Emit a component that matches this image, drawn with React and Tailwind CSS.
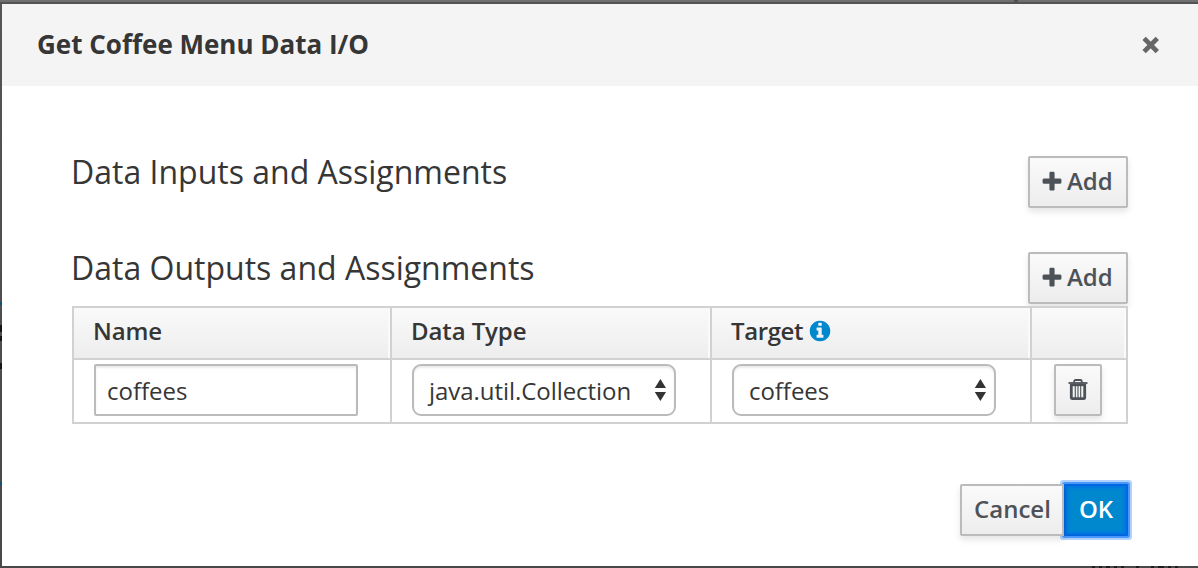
const PLUS =
  'M1600 736v192q0 40-28 68t-68 28h-416v416q0 40-28 68t-68 28h-192q-40 0-68-28t-28-68v-416h-416q-40 0-68-28t-28-68v-192q0-40 28-68t68-28h416v-416q0-40 28-68t68-28h192q40 0 68 28t28 68v416h416q40 0 68 28t28 68z';
const INFO =
  'M1152 1376v-160q0-14-9-23t-23-9h-96v-512q0-14-9-23t-23-9h-320q-14 0-23 9t-9 23v160q0 14 9 23t23 9h96v320h-96q-14 0-23 9t-9 23v160q0 14 9 23t23 9h448q14 0 23-9t9-23zm-128-896v-160q0-14-9-23t-23-9h-192q-14 0-23 9t-9 23v160q0 14 9 23t23 9h192q14 0 23-9t9-23zm640 416q0 209-103 385.5t-279.5 279.5-385.5 103-385.5-103-279.5-279.5-103-385.5 103-385.5 279.5-279.5 385.5-103 385.5 103 279.5 279.5 103 385.5z';

const BUTTON =
  'flex h-[52px] shrink-0 items-center border-2 border-[#bbb] bg-gradient-to-b from-[#fafafa] to-[#ededed] font-semibold text-[#4d5258] shadow-[0_4px_6px_rgba(3,3,3,0.1)]';

function AddButton() {
  return (
    <button className={BUTTON + ' w-[100px] rounded-[2px] pl-2.5'}>
      <svg viewBox="0 0 1792 1792" className="size-6 shrink-0" fill="currentColor">
        <path d={PLUS} />
      </svg>
      <span className="ml-[3px] pb-0.5 leading-8">Add</span>
    </button>
  );
}

function Section({ title }) {
  return (
    <div className="flex h-[52px] items-start justify-between">
      <h4 className="-ml-px text-[32px] leading-8 font-normal">{title}</h4>
      <AddButton />
    </div>
  );
}

function HeaderCell({ children }) {
  return (
    <th className="h-[52px] border-2 border-[#d1d1d1] bg-gradient-to-b from-[#fafafa] to-[#ededed] p-0 pl-[19px] text-left font-semibold tracking-[-0.1px] shadow-[inset_-2px_0_0_#fafafa]">
      <div className="flex h-8 items-center pb-1">{children}</div>
    </th>
  );
}

function SelectBox({ value }) {
  return (
    <div className="flex h-[52px] w-[264px] items-center justify-between rounded-[9px] border-2 border-[#bbb] bg-white pr-2 pl-[15px] shadow-[inset_0_2px_2px_rgba(3,3,3,0.075)]">
      <span className="pt-0.5 leading-8 tracking-[-0.05px]">{value}</span>
      <svg viewBox="0 0 12 22" className="h-[22px] w-3" fill="#333">
        <path d="M6.4 0L12 9H.8zM6.4 22L12 13H.8z" />
      </svg>
    </div>
  );
}

function BottomStrip() {
  return (
    <div className="flex h-0.5 gap-1 bg-[#48484a] pl-[1092px]">
      <span className="w-[3px] bg-[#1c1c1d]" />
      <span className="w-[3px] bg-[#1c1c1d]" />
      <span className="w-1 bg-[#1c1c1d]" />
      <span className="w-[3px] bg-[#1c1c1d]" />
      <span className="mr-2 w-[3px] bg-[#1c1c1d]" />
      <span className="mr-2 w-[3px] bg-[#1c1c1d]" />
      <span className="w-[3px] bg-[#1c1c1d]" />
      <span className="w-1.5 bg-[#1c1c1d]" />
      <span className="w-[3px] bg-[#1c1c1d]" />
      <span className="w-[3px] bg-[#1c1c1d]" />
    </div>
  );
}

export default function App() {
  return (
    <div className="flex h-[568px] w-[1198px] flex-col overflow-hidden bg-[#48484a] font-['Open_Sans',sans-serif] text-2xl text-[#363636]">
      <div className="flex h-1 shrink-0 justify-end border-b-2 border-[#535355] bg-[#707070] pr-[180px]">
        <span className="h-0.5 w-1 bg-[#505050]" />
      </div>
      <div className="flex h-[562px] shrink-0">
        <div className="flex w-0.5 shrink-0 flex-col bg-gradient-to-b from-[#555557] to-[#48484a] pt-[298px]">
          <span className="h-[3px] bg-[#0b5478]" />
          <span className="mt-5 h-[7px] bg-[#161616]" />
          <span className="mt-1 h-[5px] bg-[#161616]" />
          <span className="mt-[22px] h-1.5 bg-[#161616]" />
          <span className="mt-[113px] h-[3px] bg-[#0b5478]" />
        </div>
        <div className="flex grow flex-col bg-white">
          <header className="flex h-[82px] shrink-0 items-center justify-between bg-[#f4f4f4] pr-[38px] pl-[35px]">
            <h1 className="pb-0.5 text-[26px] leading-8 font-bold">Get Coffee Menu Data I/O</h1>
            <svg viewBox="0 0 18 18" className="size-[18px]" fill="none" stroke="#666" strokeWidth="4.8" strokeLinejoin="round">
              <path d="M2.1 2.4l13.2 13.2M15.3 2.4L2.1 15.6" />
            </svg>
          </header>
          <main className="flex flex-col px-[70px] pt-[70px]">
            <Section title="Data Inputs and Assignments" />
            <div className="mt-11">
              <Section title="Data Outputs and Assignments" />
            </div>
            <table className="mt-0.5 w-[1056px] table-fixed border-collapse">
              <colgroup>
                <col className="w-[318px]" />
                <col className="w-[320px]" />
                <col className="w-[320px]" />
                <col className="w-[96px]" />
              </colgroup>
              <thead>
                <tr>
                  <HeaderCell>Name</HeaderCell>
                  <HeaderCell>Data Type</HeaderCell>
                  <HeaderCell>
                    <span className="tracking-[-0.4px]">Target</span>
                    <svg viewBox="0 0 1792 1792" className="ml-[5px] size-6 text-[#0088ce]" fill="currentColor">
                      <path d={INFO} />
                    </svg>
                  </HeaderCell>
                  <HeaderCell />
                </tr>
              </thead>
              <tbody>
                <tr className="h-16 align-top">
                  <td className="border-2 border-[#d1d1d1] p-0 pt-1 pl-5">
                    <div className="flex h-[52px] w-[264px] items-center rounded-[2px] border-2 border-[#bbb] pl-[11px] shadow-[inset_0_2px_2px_rgba(3,3,3,0.075)]">
                      <span className="pt-0.5 leading-8">coffees</span>
                    </div>
                  </td>
                  <td className="border-2 border-[#d1d1d1] p-0 pt-1 pl-5">
                    <SelectBox value="java.util.Collection" />
                  </td>
                  <td className="border-2 border-[#d1d1d1] p-0 pt-1 pl-5">
                    <SelectBox value="coffees" />
                  </td>
                  <td className="border-2 border-[#d1d1d1] p-0 pt-1 pl-[22px]">
                    <button className={BUTTON + ' w-12 justify-center rounded-[2px]'}>
                      <svg viewBox="0 0 20 22" className="h-[22px] w-5 shrink-0" fill="none" stroke="currentColor">
                        <path d="M0.5 4h19" strokeWidth="1.8" />
                        <path d="M6.2 3.5V2.5q0-1.5 1.5-1.5h4.6q1.5 0 1.5 1.5v1" strokeWidth="1.8" />
                        <path d="M3.3 5v13.7q0 1 1 1h11.4q1 0 1-1V5" strokeWidth="2.8" />
                        <path d="M3 6h14" strokeWidth="2.4" />
                        <path d="M7.3 7v12M10 7v12M12.7 7v12" strokeWidth="1.1" />
                      </svg>
                    </button>
                  </td>
                </tr>
              </tbody>
            </table>
            <footer className="mt-[60px] flex justify-end">
              <button className={BUTTON + ' relative z-10 w-[104px] rounded-l-[2px] pl-3'}>
                <span className="pb-0.5 leading-8">Cancel</span>
              </button>
              <button className="flex h-[52px] w-16 items-center justify-center rounded-[1px] border-2 border-[#0067df] bg-[#0088ce] font-semibold text-white shadow-[0_0_0_2px_#4a98fb,0_0_0_4px_#b0d2fc,inset_0_0_0_2px_#007ade,inset_0_0_0_4px_#0083d6]">
                <span className="pb-0.5 leading-8">OK</span>
              </button>
            </footer>
          </main>
        </div>
      </div>
      <BottomStrip />
    </div>
  );
}
